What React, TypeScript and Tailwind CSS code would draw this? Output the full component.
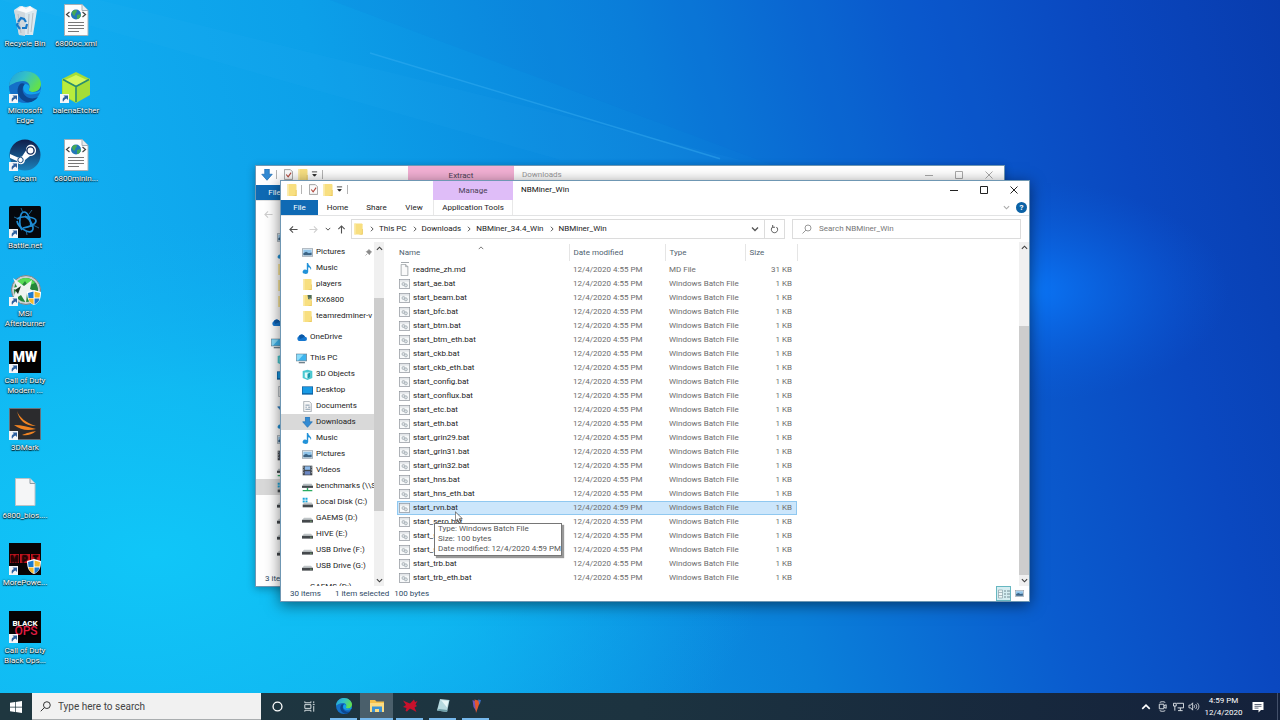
import React from "react";

type IconName =
  | "pictures"
  | "music"
  | "folder"
  | "rxfolder"
  | "onedrive"
  | "pc"
  | "objects"
  | "desktop"
  | "documents"
  | "downloads"
  | "videos"
  | "netdrive"
  | "sysdrive"
  | "drive";

const NavIcon: React.FC<{ name: IconName; className?: string }> = ({
  name,
  className = "w-[11px] h-[11px]",
}) => (
  <svg viewBox="0 0 16 16" className={`${className} shrink-0`} aria-hidden="true">
    {name === "pictures" && (
      <>
        <rect x="0.5" y="2.5" width="15" height="11" fill="#e8eef3" stroke="#8b98a3" />
        <rect x="2" y="4" width="12" height="8" fill="#8fc4ea" />
        <path d="M2 12V9l4-2 4 2 4-1v4z" fill="#3c6384" />
      </>
    )}
    {name === "music" && (
      <path
        d="M7 0h2c0 4 6 5 4 10-1-3-2-4-4-4v7a4 3 0 1 1-2-2.800z"
        fill="#2292d8"
      />
    )}
    {(name === "folder" || name === "rxfolder") && (
      <>
        <path d="M2 0h11l1 1v15H2z" fill="#f8df80" />
        <path d="M2 0h2v16H2z" fill="#fbe9a4" />
        <path d="M13 8h1v8H8l5-1z" fill="#e8c253" />
      </>
    )}
    {name === "rxfolder" && (
      <>
        <path d="M8 0h6v6H9z" fill="#4d6b5b" />
        <path d="M9 3l5 3v2z" fill="#d8e0b0" />
      </>
    )}
    {name === "onedrive" && (
      <>
        <path d="M4 13a4 4 0 0 1 0-7 5 5 0 0 1 9 1 3 3 0 0 1 0 6z" fill="#1677cf" />
        <path d="M4 6a5 5 0 0 1 9 1L6 10z" fill="#0b59a8" />
      </>
    )}
    {name === "pc" && (
      <>
        <rect x="0.5" y="1.5" width="15" height="10" fill="#3db4ee" stroke="#71838f" />
        <path d="M1 2h10L3 11H1z" fill="#8bdcfa" />
        <path d="M4 13h9v2H4z" fill="#70818c" />
      </>
    )}
    {name === "objects" && (
      <>
        <path d="M1 3l7-2 7 2v10l-7 3-7-3z" fill="#48c9d1" />
        <path d="M4 5h8v7l-4 2-4-2z" fill="#e1fafa" />
        <path d="M8 7l4-2v7l-4 2z" fill="#169bab" />
      </>
    )}
    {name === "desktop" && (
      <>
        <rect y="2" width="16" height="12" fill="#0d5f9f" />
        <rect x="1" y="3" width="14" height="9" fill="#199be5" />
      </>
    )}
    {name === "documents" && (
      <>
        <path d="M2.500 0.500h8l3 3v12h-11z" fill="#f7f7f7" stroke="#87919a" />
        <path d="M5 6h6M5 9h2M9 9h3M5 12h7" stroke="#4d6b86" />
      </>
    )}
    {name === "downloads" && (
      <path d="M5 0h6v7h4l-7 8-7-8h4z" fill="#338bd3" stroke="#206fb3" />
    )}
    {name === "videos" && (
      <>
        <rect x="1" y="1" width="14" height="14" fill="#42474d" />
        <rect x="4" y="2" width="8" height="5" fill="#8cb9e9" />
        <rect x="4" y="9" width="8" height="5" fill="#6b87c3" />
        <path d="M2 2v12M14 2v12" stroke="#c7ced2" strokeDasharray="2 2" />
      </>
    )}
    {name === "netdrive" && (
      <>
        <path d="M2 4h12l2 4H0z" fill="#b6bec2" />
        <path d="M0 7h16v3H0z" fill="#43494d" />
        <path d="M7 10h2v3h6v2H1v-2h6z" fill="#2bab61" />
      </>
    )}
    {name === "sysdrive" && (
      <>
        <path d="M1 1h3v3H1zM5 1h3v3H5zM1 5h3v3H1zM5 5h3v3H5z" fill="#19a6dc" />
        <path d="M3 8h11l2 3H1z" fill="#bec5c8" />
        <path d="M1 11h15v4H1z" fill="#454b4f" />
      </>
    )}
    {name === "drive" && (
      <>
        <path d="M3 7h10l3 3H0z" fill="#c0c5c8" />
        <path d="M0 10h16v4H0z" fill="#44484c" />
        <path d="M12 12h2" stroke="#8be07e" />
      </>
    )}
  </svg>
);

const BatIcon: React.FC = () => (
  <svg viewBox="0 0 16 14" className="w-[11px] h-[10px] shrink-0" aria-hidden="true">
    <rect x="0.5" y="0.5" width="15" height="13" fill="#f7f9fa" stroke="#8b9298" />
    <path d="M1 2.500h14" stroke="#c4cbd0" />
    <circle cx="6.5" cy="7" r="2.2" fill="#dde2e6" stroke="#9aa4ab" />
    <circle cx="10" cy="9" r="2.2" fill="#dde2e6" stroke="#9aa4ab" />
  </svg>
);

const PageIcon: React.FC = () => (
  <svg viewBox="0 0 12 16" className="w-[11px] h-[12px] shrink-0" aria-hidden="true">
    <path d="M1.500 0.500h6l3 3v12h-9z" fill="#fafafa" stroke="#93999e" />
    <path d="M7.500 0.500v3h3" fill="none" stroke="#93999e" />
  </svg>
);

/* ---------- Explorer window ---------- */

interface NavItem {
  label: string;
  icon: IconName;
  root?: boolean;
  pinned?: boolean;
}

const navGroups: NavItem[][] = [
  [
    { label: "Pictures", icon: "pictures", pinned: true },
    { label: "Music", icon: "music" },
    { label: "players", icon: "folder" },
    { label: "RX6800", icon: "rxfolder" },
    { label: "teamredminer-v", icon: "folder" },
  ],
  [{ label: "OneDrive", icon: "onedrive", root: true }],
  [
    { label: "This PC", icon: "pc", root: true },
    { label: "3D Objects", icon: "objects" },
    { label: "Desktop", icon: "desktop" },
    { label: "Documents", icon: "documents" },
    { label: "Downloads", icon: "downloads" },
    { label: "Music", icon: "music" },
    { label: "Pictures", icon: "pictures" },
    { label: "Videos", icon: "videos" },
    { label: "benchmarks (\\\\S", icon: "netdrive" },
    { label: "Local Disk (C:)", icon: "sysdrive" },
    { label: "GAEMS (D:)", icon: "drive" },
    { label: "HIVE (E:)", icon: "drive" },
    { label: "USB Drive (F:)", icon: "drive" },
    { label: "USB Drive (G:)", icon: "drive" },
  ],
  [{ label: "GAEMS (D:)", icon: "drive", root: true }],
];

const batFiles = [
  "start_ae.bat",
  "start_beam.bat",
  "start_bfc.bat",
  "start_btm.bat",
  "start_btm_eth.bat",
  "start_ckb.bat",
  "start_ckb_eth.bat",
  "start_config.bat",
  "start_conflux.bat",
  "start_etc.bat",
  "start_eth.bat",
  "start_grin29.bat",
  "start_grin31.bat",
  "start_grin32.bat",
  "start_hns.bat",
  "start_hns_eth.bat",
  "start_rvn.bat",
  "start_sero.bat",
  "start_sipc.bat",
  "start_smart.bat",
  "start_trb.bat",
  "start_trb_eth.bat",
];

const files = [
  { name: "readme_zh.md", date: "12/4/2020 4:55 PM", type: "MD File", size: "31 KB" },
  ...batFiles.map((name) => ({
    name,
    date: name === "start_rvn.bat" ? "12/4/2020 4:59 PM" : "12/4/2020 4:55 PM",
    type: "Windows Batch File",
    size: "1 KB",
  })),
];

const Chevron: React.FC<{ dir: "up" | "down" | "right"; className?: string }> = ({
  dir,
  className = "w-[7px] h-[7px]",
}) => (
  <svg
    viewBox="0 0 8 8"
    className={`${className} shrink-0`}
    fill="none"
    stroke="currentColor"
    strokeWidth="1.3"
    aria-hidden="true"
  >
    {dir === "up" && <path d="M1 5.500l3-3 3 3" />}
    {dir === "down" && <path d="M1 2.500l3 3 3-3" />}
    {dir === "right" && <path d="M2.500 1l3 3-3 3" />}
  </svg>
);

const Arrow: React.FC<{ dir: "left" | "right" | "up" }> = ({ dir }) => (
  <svg
    viewBox="0 0 10 10"
    className="w-[9px] h-[9px]"
    fill="none"
    stroke="currentColor"
    strokeWidth="1.2"
    aria-hidden="true"
  >
    {dir === "left" && <path d="M9.500 5H1M4.500 1.500L1 5l3.500 3.500" />}
    {dir === "right" && <path d="M0.500 5H9M5.500 1.500L9 5 5.500 8.500" />}
    {dir === "up" && <path d="M5 9.500V1M1.500 4.500L5 1l3.500 3.500" />}
  </svg>
);

const Scrollbar: React.FC<{ thumb: string }> = ({ thumb }) => (
  <div className="w-[10px] shrink-0 bg-[#f0f0f0] flex flex-col items-center text-[#404040]">
    <div className="h-[12px] flex items-center">
      <Chevron dir="up" />
    </div>
    <div className="flex-1 w-full flex flex-col">
      <div className={`w-full bg-[#cdcdcd] ${thumb}`} />
    </div>
    <div className="h-[12px] flex items-center">
      <Chevron dir="down" />
    </div>
  </div>
);

interface ExplorerProps {
  title: string;
  titleIcon: IconName;
  tabGroup: string;
  tabGroupClass: string;
  tabLabel?: string;
  path?: string[];
  selectedNav: string;
  status: string[];
  active?: boolean;
  className: string;
  children?: React.ReactNode;
}

const Explorer: React.FC<ExplorerProps> = ({
  title,
  titleIcon,
  tabGroup,
  tabGroupClass,
  tabLabel,
  path = [],
  selectedNav,
  status,
  active = false,
  className,
  children,
}) => (
  <section
    aria-label={title}
    className={`absolute w-[750px] h-[422px] bg-white border border-[#6f97b3] flex flex-col text-[8px] leading-[10px] text-[#222] ${className}`}
  >
    {/* Title bar + ribbon tabs */}
    <div className="flex h-[35px] shrink-0 border-b border-[#e2e3e4]">
      <div className="w-[152px] shrink-0 flex flex-col">
        <div className="h-[19px] flex items-center pl-[5px] pb-[2px]">
          <NavIcon name={titleIcon} className="w-[12px] h-[12px]" />
          <span className="w-px h-[9px] bg-[#b4b4b4] ml-[3px]" />
          <svg viewBox="0 0 12 14" className="w-[9px] h-[11px] ml-[7px]" aria-hidden="true">
            <path d="M0.500 0.500h8l3 3v10h-11z" fill="#fbfbfb" stroke="#868686" />
            <path d="M3 7l2.500 3L9.500 4.500" fill="none" stroke="#b0473c" strokeWidth="1.5" />
          </svg>
          <NavIcon name="folder" className="w-[12px] h-[12px] ml-[4px]" />
          <svg viewBox="0 0 8 8" className="w-[7px] h-[7px] ml-[2px]" aria-hidden="true">
            <path d="M1 1h6M2 4h4l-2 2z" fill="#222" stroke="#222" strokeWidth="0.9" />
          </svg>
          <span className="w-px h-[9px] bg-[#b4b4b4] ml-[4px]" />
        </div>
        <div className="flex h-[15px]">
          <button className="w-[37px] bg-[#0f6ab4] text-white">File</button>
          {active && (
            <>
              <button className="w-[39px]">Home</button>
              <button className="w-[39px]">Share</button>
              <button className="w-[36px]">View</button>
            </>
          )}
        </div>
      </div>
      <div className={`shrink-0 flex flex-col pt-[1px] ${tabGroupClass}`}>
        <div className="h-[18px] flex items-center justify-center text-[#4a4055]">{tabGroup}</div>
        <button className="h-[15px] bg-white border-x border-[#e8e8e8] whitespace-nowrap">
          {tabLabel}
        </button>
      </div>
      <div className="flex-1 flex flex-col">
        <div className="h-[19px] flex items-center pl-[8px] pb-[2px]">
          <span className={active ? "text-[#111]" : "text-[#999]"}>{title}</span>
          <div className={`ml-auto flex ${active ? "text-[#222]" : "text-[#aaa]"}`}>
            {["M0 4.500h8", "M0.500 0.500h7v7h-7z", "M0.500 0.500l7 7M7.500 0.500l-7 7"].map((d, i) => (
              <button
                key={d}
                aria-label={["Minimize", "Maximize", "Close"][i]}
                className="w-[30px] h-[16px] flex items-center justify-center"
              >
                <svg viewBox="0 0 8 8" className="w-[8px] h-[8px]" fill="none" stroke="currentColor">
                  <path d={d} />
                </svg>
              </button>
            ))}
          </div>
        </div>
        <div className="h-[15px] flex items-center justify-end gap-[6px] pr-[2px] text-[#aaa]">
          <Chevron dir="down" />
          {active && (
            <button
              aria-label="Help"
              className="w-[11px] h-[11px] rounded-full bg-[#0b62a6] text-white font-bold"
            >
              ?
            </button>
          )}
        </div>
      </div>
    </div>

    {/* Address row */}
    <div className="h-[26px] shrink-0 flex items-center pr-[8px]">
      <div className="w-[70px] shrink-0 flex items-center pl-[8px] text-[#505050]">
        <button aria-label="Back" className={active ? "" : "text-[#cfcfcf]"}>
          <Arrow dir="left" />
        </button>
        <button aria-label="Forward" className="ml-[11px] text-[#cfcfcf]">
          <Arrow dir="right" />
        </button>
        <button aria-label="Recent" className="ml-[7px]">
          <Chevron dir="down" className="w-[6px] h-[6px]" />
        </button>
        <button aria-label="Up" className="ml-[6px]">
          <Arrow dir="up" />
        </button>
      </div>
      <div className="flex-1 h-[20px] border border-[#dcdcdc] flex items-center pl-[1px]">
        <NavIcon name="folder" className="w-[11px] h-[12px]" />
        {path.map((part) => (
          <React.Fragment key={part}>
            <Chevron dir="right" className="w-[6px] h-[6px] ml-[5px] mr-[4px] text-[#555]" />
            <span className="whitespace-nowrap">{part}</span>
          </React.Fragment>
        ))}
        <button aria-label="Previous locations" className="ml-auto mr-[5px] text-[#555]">
          <Chevron dir="down" className="w-[8px] h-[8px]" />
        </button>
        <button
          aria-label="Refresh"
          className="w-[20px] h-full border-l border-[#dcdcdc] flex items-center justify-center text-[#555]"
        >
          <svg viewBox="0 0 10 10" className="w-[9px] h-[9px]" fill="none" stroke="currentColor" strokeWidth="1.1">
            <path d="M7 2.200A3.500 3.500 0 1 1 3 2.200M3 0v2.500h2.500" />
          </svg>
        </button>
      </div>
      <label className="w-[229px] h-[20px] ml-[7px] border border-[#dcdcdc] flex items-center pl-[9px] gap-[7px] text-[#777]">
        <svg viewBox="0 0 10 10" className="w-[10px] h-[10px]" fill="none" stroke="#999">
          <circle cx="6" cy="4" r="3" />
          <path d="M4 6L0.500 9.500" />
        </svg>
        {active && (
          <input
            aria-label={`Search ${title}`}
            placeholder={`Search ${title}`}
            className="flex-1 min-w-0 outline-none placeholder:text-[#777]"
          />
        )}
      </label>
    </div>

    {/* Navigation pane + content */}
    <div className="flex-1 min-h-0 flex">
      <nav className="w-[93px] shrink-0 overflow-hidden flex flex-col gap-[5px] pt-[2px]">
        {navGroups.map((group, g) => (
          <ul key={g}>
            {group.map((item) => (
              <li
                key={item.label}
                className={`h-[16px] flex items-center gap-[3px] whitespace-nowrap ${
                  item.root ? "pl-[15px]" : "pl-[21px]"
                } ${item.label === selectedNav ? "bg-[#d9d9d9]" : ""}`}
              >
                <NavIcon name={item.icon} />
                {active && <a href="#">{item.label}</a>}
                {item.pinned && (
                  <svg viewBox="0 0 8 8" className="w-[7px] h-[7px] ml-auto mr-[2px]" aria-hidden="true">
                    <path d="M4.500 0.500l3 3-1 .5-1.500 2.500-3.500-3.500L4 1.500zM2.500 5.500L0.500 7.500" fill="#888" stroke="#888" strokeWidth="0.7" />
                  </svg>
                )}
              </li>
            ))}
          </ul>
        ))}
      </nav>
      <Scrollbar thumb="mt-[44px] h-[213px]" />
      {children}
    </div>

    {/* Status bar */}
    <div className="h-[15px] shrink-0 flex items-center pl-[9px] pr-[4px] text-[#2c4a66]">
      {status.map((text, i) => (
        <span key={text} className={i === 1 ? "ml-[14px]" : i === 2 ? "ml-[5px]" : ""}>
          {text}
        </span>
      ))}
      <div className="ml-auto flex items-center gap-[2px]">
        <button
          aria-label="Details view"
          className="w-[15px] h-[15px] border border-[#67b7c1] bg-[#d5edf1] flex items-center justify-center"
        >
          <svg viewBox="0 0 12 10" className="w-[12px] h-[10px]">
            <path d="M0.500 1h4v8h-4zM0.500 3.500h4M0.500 6.500h4" fill="#eef6f7" stroke="#8da3ab" strokeWidth="0.7" />
            <path d="M6 2h2M9 2h3M6 5h2M9 5h3M6 8h2M9 8h3" stroke="#708a93" />
          </svg>
        </button>
        <button aria-label="Large icons view" className="w-[12px] h-[12px] flex items-center justify-center">
          <NavIcon name="pictures" className="w-[9px] h-[9px]" />
        </button>
      </div>
    </div>
  </section>
);

const FileList: React.FC = () => (
  <div className="flex-1 min-w-0 flex">
    <div className="flex-1 min-w-0 overflow-hidden pl-[13px] pt-[2px]">
      <table className="w-[400px] table-fixed border-collapse text-left">
        <colgroup>
          <col className="w-[172px]" />
          <col className="w-[96px]" />
          <col className="w-[80px]" />
          <col className="w-[52px]" />
        </colgroup>
        <thead className="text-[#4f5f70]">
          <tr className="h-[17px]">
            <th className="font-normal p-0 pl-[2px] border-r border-[#e5e5e5]">
              <span className="flex items-center">
                Name
                <Chevron dir="up" className="w-[6px] h-[6px] ml-[58px] mb-[10px] text-[#777]" />
              </span>
            </th>
            <th className="font-normal p-0 pl-[4px] border-r border-[#e5e5e5]">Date modified</th>
            <th className="font-normal p-0 pl-[4px] border-r border-[#e5e5e5]">Type</th>
            <th className="font-normal p-0 pl-[4px] border-r border-[#e5e5e5]">Size</th>
          </tr>
        </thead>
        <tbody>
          {/* bottom edge of the row scrolled under the header */}
          <tr className="h-[2px]">
            <td className="p-0" colSpan={4}>
              <div className="ml-[4px] w-[8px] h-[2px] border-b border-[#a5aaae]" />
            </td>
          </tr>
          {files.map((file) => (
            <tr
              key={file.name}
              className={`h-[14px] ${
                file.name === "start_rvn.bat"
                  ? "bg-[#cce6fb] outline outline-[#90c8f0] -outline-offset-1"
                  : ""
              }`}
            >
              <td className="p-0 pl-[2px]">
                <span className="flex items-center gap-[3px] whitespace-nowrap">
                  {file.type === "MD File" ? <PageIcon /> : <BatIcon />}
                  {file.name}
                </span>
              </td>
              <td className="p-0 pl-[4px] text-[#6d6d6d] whitespace-nowrap">{file.date}</td>
              <td className="p-0 pl-[4px] text-[#6d6d6d] whitespace-nowrap">{file.type}</td>
              <td className="p-0 pr-[5px] text-[#6d6d6d] text-right whitespace-nowrap">{file.size}</td>
            </tr>
          ))}
        </tbody>
      </table>
    </div>
    <Scrollbar thumb="mt-[73px] h-[249px]" />
  </div>
);

/* ---------- Desktop icons ---------- */

const ShortcutArrow: React.FC = () => (
  <g>
    <rect x="0" y="23" width="9" height="9" fill="#f4f6f8" />
    <path d="M3 31c-1-3 0-4.500 2-5L3.500 24.500H8V29l-1.500-1.500C5 28 4 29 3 31z" fill="#2c5f9e" />
  </g>
);

const Shield: React.FC = () => (
  <g>
    <path d="M18 18l7-2 7 2c0 7-2 11-7 13-5-2-7-6-7-13z" fill="#fff" />
    <path d="M25.500 17.500L31 19l-.4 4.500h-5zM19.600 24.500h5v6c-3-1.500-4.500-3-5-6z" fill="#f5b92c" />
    <path d="M19 19l5.500-1.500V24H19.500zM25.500 24.500h5c-.5 3-2 4.500-5 6z" fill="#1c7bd0" />
  </g>
);

const EdgeSwirl: React.FC = () => (
  <g>
    <defs>
      <linearGradient id="edgeTop" x1="0" y1="0" x2="1" y2="0.5">
        <stop offset="0" stopColor="#1d9ee0" />
        <stop offset="0.5" stopColor="#34c1c8" />
        <stop offset="1" stopColor="#62e04e" />
      </linearGradient>
    </defs>
    <circle cx="16" cy="16" r="16" fill="#1470c8" />
    <path d="M0 15C1 5 8 0 16 0c10 0 16 7 16 13 0 5-4 8-8 8-3 0-5-1-4-3 2-4-1-8-6-8-7 0-12 4-14 5z" fill="url(#edgeTop)" />
    <path d="M11 13c-5 6-2 15 6 18 5 1 9-1 12-5-6 3-13 1-15-5-1-3 0-6 2-8-2-1-4-1-5 0z" fill="#0c4790" />
    <path d="M16 13c-3 3-2 8 2 10 4 1 9 0 12-1 1-1 2-2 2-4-1 2-5 4-9 3-3 0-4-1-3-3 1-2 0-5-4-5z" fill="#12a5ee" />
  </g>
);

const XmlFile: React.FC = () => (
  <g>
    <path d="M4.500 0.500H22l6 6v25H4.500z" fill="#fdfdfd" stroke="#a6b0b6" />
    <path d="M22 0.500v6h6" fill="#e8ecee" stroke="#a6b0b6" />
    <circle cx="16" cy="10.5" r="5" fill="#2277b8" />
    <path d="M12 8c2-3 5-2 5-1s-2 2-2 4-3 0-3-3zM17 11l4-1c0 3-2 5-4 5z" fill="#46a955" />
    <path d="M9.500 8l-3 2.500 3 2.500M22.500 8l3 2.500-3 2.500" fill="none" stroke="#444" strokeWidth="1.2" />
    <path d="M8 18.500h16M8 21.500h16M8 24.500h16M8 27.500h11" stroke="#777" strokeWidth="1.2" />
  </g>
);

const desktopIcons: { label: string; art: React.ReactNode }[] = [
  {
    label: "Recycle Bin",
    art: (
      <>
        <path d="M5 6l6-4 6 1 4-1 7 4-4 25-14 0z" fill="#e6ebee" opacity="0.95" />
        <path d="M5 6l5 25 6 1V8z" fill="#d0d8dd" />
        <path d="M8 6l5-4 4 3 4-3 4 4-8 3z" fill="#fafbfc" />
        <path d="M20 10l-1 20M24 9l-2 19M9 10l3 19" stroke="#b4bec5" />
        <path d="M9 18l3-4 3 1 2 3M18 20l-1 4h-4M11 25l-3-4 1-2" fill="none" stroke="#1678c8" strokeWidth="2.2" />
      </>
    ),
  },
  {
    label: "Microsoft Edge",
    art: (
      <>
        <EdgeSwirl />
        <ShortcutArrow />
      </>
    ),
  },
  {
    label: "Steam",
    art: (
      <>
        <defs>
          <linearGradient id="steam" x1="0" y1="0" x2="0" y2="1">
            <stop offset="0" stopColor="#101d4a" />
            <stop offset="1" stopColor="#1c80b9" />
          </linearGradient>
        </defs>
        <circle cx="16" cy="16" r="15.5" fill="url(#steam)" />
        <path d="M1 15l8 3.500 4-1 4-6c0-8 10-7 10 0 0 4-3 5.500-6 5.500l-5 4c0 5-7 6-8 1l-7-3z" fill="#fff" />
        <circle cx="21.5" cy="11.5" r="3.6" fill="#fff" stroke="#132b5b" strokeWidth="1.4" />
        <circle cx="11.5" cy="21" r="2.7" fill="none" stroke="#17497e" />
        <ShortcutArrow />
      </>
    ),
  },
  {
    label: "Battle.net",
    art: (
      <>
        <rect width="32" height="32" rx="1.5" fill="#05080d" />
        <g fill="none" stroke="#1f8ed6" strokeWidth="1.7">
          <path d="M13 24C9 18 11 6 15 6c4 0 7 8 7 15" />
          <path d="M8 13c5-4 19-2 19 2 0 3-6 6-13 7" />
          <path d="M8 15c1 6 11 13 15 10 3-3-1-11-7-15" />
        </g>
        <path d="M12 2l2 5M30 22l-6-3M18 29l-1-5M5 11l5 2M20 8l3-4" stroke="#247fb9" strokeWidth="0.8" />
        <ShortcutArrow />
      </>
    ),
  },
  {
    label: "MSI Afterburner",
    art: (
      <>
        <circle cx="17" cy="16" r="14.5" fill="#c9cecf" stroke="#7d8587" />
        <circle cx="17" cy="16" r="12" fill="#25873a" />
        <path d="M8 8c5-6 14-5 18 1l-7 3-3-5-3 4z" fill="#58dc56" />
        <path d="M4 4l11 8 8-6-2 9 6 3-9 1-1 10-5-8-8 5 3-10-4-2 5-1z" fill="#eef3f0" />
        <path d="M12 12l-6 4 3 4z" fill="#17331d" />
        <Shield />
        <ShortcutArrow />
      </>
    ),
  },
  {
    label: "Call of Duty Modern ...",
    art: (
      <>
        <rect width="32" height="32" fill="#020202" />
        <text x="16" y="21" textAnchor="middle" fontSize="14" fontWeight="900" fill="#fff">
          MW
        </text>
        <ShortcutArrow />
      </>
    ),
  },
  {
    label: "3DMark",
    art: (
      <>
        <rect x="0.5" y="0.5" width="31" height="31" fill="#2b2b2d" stroke="#68717a" />
        <path d="M8 3c2 6 9 12 19 15C16 18 10 12 8 3zM5 17c8 0 14 2 22 4-9 2-15 1-22-4zM13 27c4 1 10 0 14-4-6 1-9 2-14 4z" fill="#f08322" />
        <ShortcutArrow />
      </>
    ),
  },
  {
    label: "6800_bios....",
    art: (
      <>
        <path d="M6.500 2.500H21l5 5v22H6.500z" fill="#f5f6f7" stroke="#bac3c8" />
        <path d="M21 2.500v5h5" fill="#e2e6e9" stroke="#8f9ca4" />
      </>
    ),
  },
  {
    label: "MorePowe...",
    art: (
      <>
        <rect width="32" height="32" fill="#080405" />
        <path d="M1 11h9v9H1zM11 11h10v9H11zM22 11h9v9h-9z" fill="#c9141e" />
        <g textAnchor="middle" fontSize="9" fontWeight="700" fill="#2a0204">
          <text x="5.5" y="19">M</text>
          <text x="16" y="19">P</text>
          <text x="26.5" y="19">T</text>
        </g>
        <Shield />
        <ShortcutArrow />
      </>
    ),
  },
  {
    label: "Call of Duty Black Ops...",
    art: (
      <>
        <rect width="32" height="32" fill="#050304" />
        <text x="16" y="15" textAnchor="middle" fontSize="8" fontWeight="800" fill="#fff">
          BLACK
        </text>
        <text x="17" y="24" textAnchor="middle" fontSize="12" fontWeight="500" fill="#e01c43">
          OPS
        </text>
        <ShortcutArrow />
      </>
    ),
  },
  { label: "6800oc.xml", art: <XmlFile /> },
  {
    label: "balenaEtcher",
    art: (
      <>
        <path d="M16 1l14 7v16l-14 8-14-8V8z" fill="#a5de37" />
        <path d="M16 4l11 5-11 6L5 9z" fill="#d3f75c" />
        <path d="M3 9l13 7v15L3 24z" fill="#b9ec3c" />
        <path d="M3 8.500l13 7 13-7M16 15.500V31" fill="none" stroke="#2a8c70" strokeWidth="1.6" />
        <ShortcutArrow />
      </>
    ),
  },
  { label: "6800minin...", art: <XmlFile /> },
];

/* ---------- Taskbar ---------- */

const systemButtons: { label: string; art: React.ReactNode }[] = [
  {
    label: "Cortana",
    art: <circle cx="16" cy="16" r="9.5" fill="none" stroke="#fff" strokeWidth="2.8" />,
  },
  {
    label: "Task View",
    art: (
      <path
        d="M6 5v3h13V5M6 27v-3h13v3M6 12h13v8H6zM25 5v4M25 15v12M23 12h4"
        fill="none"
        stroke="#dfe6e9"
        strokeWidth="2"
      />
    ),
  },
];

const taskbarApps: { label: string; focused?: boolean; art: React.ReactNode }[] = [
  { label: "Microsoft Edge", art: <EdgeSwirl /> },
  {
    label: "File Explorer",
    focused: true,
    art: (
      <>
        <path d="M2 4h10l3 3h15v20H2z" fill="#f5c04a" />
        <path d="M2 10h28v18H2z" fill="#fbdc83" />
        <path d="M6 17h20v11h-6v-6h-8v6H6z" fill="#3a92d5" />
      </>
    ),
  },
  {
    label: "Red Devil",
    art: (
      <path
        d="M2 5l9 4 5 2 8-8 2 5 5-2-4 7 3 3-5 3 4 9-9-5-4-2-6 6-3-1 2-6-7-2 6-4z"
        fill="#c8112c"
      />
    ),
  },
  {
    label: "Notepad",
    art: (
      <>
        <path d="M10 2l19 2-5 24-20-3z" fill="#b6d9df" />
        <path d="M12 4l15 2-3 13z" fill="#e7f6f7" />
        <path d="M8 22l17 2-1 4-20-3z" fill="#6d9da7" />
      </>
    ),
  },
  {
    label: "Radeon",
    art: (
      <>
        <path d="M9 4l7 3 1 20-6-9z" fill="#6f55bd" />
        <path d="M13 3l11 3-3 10-5 14z" fill="#e4572e" />
        <path d="M20 3l6 1-3 10z" fill="#3c6fc9" />
      </>
    ),
  },
];

const Taskbar: React.FC = () => (
  <footer className="h-[27px] shrink-0 flex bg-linear-to-r from-[#1f3740] via-[#1c3340] to-[#14213b] text-white text-[8px]">
    <button aria-label="Start" className="w-[32px] flex items-center justify-center">
      <svg viewBox="0 0 12 12" className="w-[12px] h-[12px]">
        <path d="M0 1.800l5-.7v4.600H0zM5.700 1L12 0v5.700H5.700zM0 6.400h5V11l-5-.7zM5.700 6.400H12V12l-6.300-.9z" fill="#fff" />
      </svg>
    </button>
    <label className="w-[229px] flex items-center gap-[7px] pl-[8px] bg-[#f1f1f1] border-b border-[#a9adaf]">
      <svg viewBox="0 0 12 12" className="w-[11px] h-[11px]" fill="none" stroke="#222">
        <circle cx="7.5" cy="4.5" r="3.7" />
        <path d="M4.800 7.200L0.800 11.200" />
      </svg>
      <input
        aria-label="Type here to search"
        placeholder="Type here to search"
        className="flex-1 min-w-0 text-[10px] outline-none placeholder:text-[#444]"
      />
    </label>
    <div className="flex">
      {systemButtons.map((item) => (
        <button
          key={item.label}
          aria-label={item.label}
          className="w-[32px] flex items-center justify-center"
        >
          <svg viewBox="0 0 32 32" className="w-[15px] h-[15px]">
            {item.art}
          </svg>
        </button>
      ))}
    </div>
    <div className="flex pl-[2px]">
      {taskbarApps.map((app) => (
        <button
          key={app.label}
          aria-label={app.label}
          className={`w-[33px] flex flex-col items-center ${app.focused ? "bg-[#4a5f6b]" : ""}`}
        >
          <span className="flex-1 flex items-center">
            <svg viewBox="0 0 32 32" className="w-[16px] h-[16px]">
              {app.art}
            </svg>
          </span>
          <span className={`h-[2px] bg-[#76b9ed] ${app.focused ? "w-full" : "w-[27px]"}`} />
        </button>
      ))}
    </div>
    <div className="ml-auto flex items-center">
      <button aria-label="Show hidden icons" className="w-[16px] flex justify-center">
        <Chevron dir="up" className="w-[10px] h-[10px]" />
      </button>
      <button aria-label="Meet Now" className="w-[16px] flex justify-center">
        <svg viewBox="0 0 12 12" className="w-[11px] h-[11px]" fill="none" stroke="#e5e9ee">
          <path d="M3 1.500c2-1 4-1 6 0M3 10.500c2 1 4 1 6 0M2.500 3.500h5v5h-5zM7.500 5.500l2.500-1.500v4L7.500 6.500" />
        </svg>
      </button>
      <button aria-label="Network" className="w-[16px] flex justify-center">
        <svg viewBox="0 0 12 12" className="w-[11px] h-[11px]" fill="none" stroke="#e5e9ee">
          <path d="M4 2.500h7.500v5H5M8 7.500v3M5.500 10.500h5M0.500 2.500h3v3h-3zM2 5.500v5" />
        </svg>
      </button>
      <button aria-label="Volume" className="w-[16px] flex justify-center">
        <svg viewBox="0 0 12 12" className="w-[12px] h-[11px]" fill="none" stroke="#e5e9ee" strokeWidth="0.9">
          <path d="M0.500 4.500h2l2-2.500v8l-2-2.500h-2zM6 4.500c.8 1 .8 2 0 3M7.800 3.300c1.500 1.700 1.500 3.700 0 5.400M9.500 2c2.400 2.500 2.400 5.500 0 8" />
        </svg>
      </button>
      <div className="w-[43px] text-center leading-[12px]">
        <div>4:59 PM</div>
        <div>12/4/2020</div>
      </div>
      <button aria-label="Notifications" className="w-[26px] flex justify-center">
        <svg viewBox="0 0 12 12" className="w-[12px] h-[12px]">
          <path d="M0.500 1h11v8H9l-2.500 2.500V9h-6z" fill="#fff" />
          <path d="M2.500 3.500h7M2.500 5.300h7M2.500 7.100h4" stroke="#1a2740" strokeWidth="0.7" />
        </svg>
      </button>
      <span className="w-px h-full bg-[#43506a] ml-[6px] mr-[2px]" />
    </div>
  </footer>
);

const Wallpaper: React.FC = () => (
  <svg
    viewBox="0 0 1280 720"
    preserveAspectRatio="none"
    className="absolute inset-0 w-full h-full"
    aria-hidden="true"
  >
    <defs>
      <linearGradient id="sky" x1="0" y1="0.15" x2="1" y2="0">
        <stop offset="0" stopColor="#12b0f2" />
        <stop offset="0.25" stopColor="#0ca0e9" />
        <stop offset="0.5" stopColor="#0a80da" />
        <stop offset="0.7" stopColor="#0a5bce" />
        <stop offset="0.85" stopColor="#0a48c0" />
        <stop offset="1" stopColor="#083cae" />
      </linearGradient>
      <radialGradient id="cyan" cx="0.12" cy="0.8" r="0.48">
        <stop offset="0" stopColor="#10c6f8" />
        <stop offset="0.5" stopColor="#10c0f4" stopOpacity="0.7" />
        <stop offset="1" stopColor="#10b0f0" stopOpacity="0" />
      </radialGradient>
      <radialGradient id="glow" cx="0.8" cy="0.42" r="0.16">
        <stop offset="0" stopColor="#0a7cff" stopOpacity="0.85" />
        <stop offset="1" stopColor="#0a60e0" stopOpacity="0" />
      </radialGradient>
    </defs>
    <rect width="1280" height="720" fill="url(#sky)" />
    <rect width="1280" height="720" fill="url(#cyan)" />
    <rect width="1280" height="720" fill="url(#glow)" />
    <path d="M330 0L1000 260V0z" fill="#0a50c8" opacity="0.06" />
    <path d="M0 0h100l640 166H560z" fill="#4cc4ff" opacity="0.05" />
    <path d="M370 55L720 165" stroke="#3fb4f5" strokeWidth="1.5" opacity="0.4" />
  </svg>
);

export default function App() {
  return (
    <div className="h-screen overflow-hidden flex flex-col font-['Roboto','Noto_Sans',sans-serif]">
      <main className="relative flex-1 min-h-0 overflow-hidden">
        <Wallpaper />

        {/* Shortcuts fill top to bottom, then the next column */}
        <div className="relative h-full pb-[19px] grid grid-flow-col grid-rows-[repeat(10,minmax(0,1fr))] auto-cols-[50px] gap-x-px justify-start">
          {desktopIcons.map((item) => (
            <button
              key={item.label}
              className="flex flex-col items-center justify-start pt-[4px] gap-[3px] text-white text-[8px] leading-[10px] [text-shadow:0_1px_1px_#000,0_0_2px_#000]"
            >
              <svg viewBox="0 0 32 32" className="w-[32px] h-[32px] shrink-0" aria-hidden="true">
                {item.art}
              </svg>
              <span className="w-[50px]">{item.label}</span>
            </button>
          ))}
        </div>

        <Explorer
          title="Downloads"
          titleIcon="downloads"
          tabGroup="Extract"
          tabGroupClass="w-[106px] bg-[#f3b0d4]"
          selectedNav="Local Disk (C:)"
          status={["3 items"]}
          className="left-[255px] top-[165px] shadow-[0_2px_8px_rgba(0,0,0,0.3)]"
        />

        <Explorer
          active
          title="NBMiner_Win"
          titleIcon="folder"
          tabGroup="Manage"
          tabGroupClass="w-[80px] bg-[#dfbdf8]"
          tabLabel="Application Tools"
          path={["This PC", "Downloads", "NBMiner_34.4_Win", "NBMiner_Win"]}
          selectedNav="Downloads"
          status={["30 items", "1 item selected", "100 bytes"]}
          className="left-[280px] top-[180px] shadow-[0_3px_14px_rgba(0,0,0,0.5)]"
        >
          <FileList />
        </Explorer>

        {/* Tooltip and pointer */}
        <div
          role="tooltip"
          className="absolute left-[434px] top-[523px] w-[128px] h-[33px] pl-[3px] bg-white border border-[#767676] text-[8px] leading-[10px] text-[#575757] whitespace-nowrap shadow-[2px_2px_1px_rgba(0,0,0,0.4)]"
        >
          <p>Type: Windows Batch File</p>
          <p>Size: 100 bytes</p>
          <p>Date modified: 12/4/2020 4:59 PM</p>
        </div>
        <svg viewBox="0 0 12 18" className="absolute left-[455px] top-[511px] w-[8px] h-[13px]" aria-hidden="true">
          <path d="M0.500 0.500v14l3.300-3 2.200 5.500 2.400-1-2.200-5.300h4.800z" fill="#fff" stroke="#333" />
        </svg>
      </main>
      <Taskbar />
    </div>
  );
}
